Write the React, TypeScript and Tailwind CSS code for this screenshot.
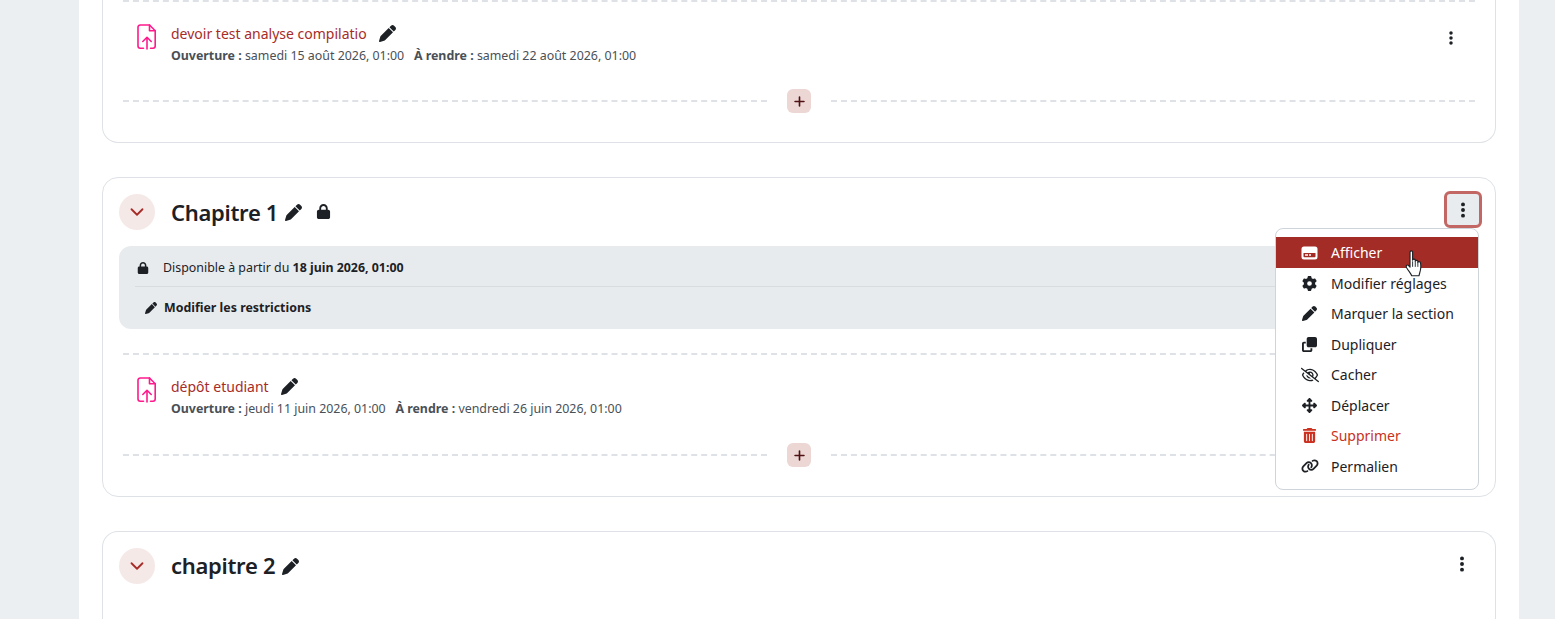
import React from "react";
import { ChevronDown } from "lucide-react";
import {
  FaPen,
  FaLock,
  FaEllipsisVertical,
  FaGear,
  FaClone,
  FaRegEyeSlash,
  FaUpDownLeftRight,
  FaTrashCan,
  FaLink,
  FaPlus,
} from "react-icons/fa6";

function FileUp() {
  return (
    <svg width="20" height="26" viewBox="0 0 20 26" fill="none" stroke="#ff1a8c" strokeWidth="1.6" strokeLinejoin="round" strokeLinecap="round">
      <path d="M6.5 24.2H3.2A2.2 2.2 0 0 1 1 22V3.2A2.2 2.2 0 0 1 3.2 1H12.5L18.2 6.8V22A2.2 2.2 0 0 1 16 24.2H13.5" />
      <path d="M12.5 1V6.8H18.2" />
      <path d="M10 25V13.5M5.8 17.5L10 13.3L14.2 17.5" />
    </svg>
  );
}

function Dashed() {
  return <div className="h-0 border-t-2 border-dashed border-[#dee2e6] flex-1" />;
}

function AddRow() {
  return (
    <div className="flex items-center gap-[20px]">
      <Dashed />
      <div className="w-6 h-6 rounded-md bg-[#ecd7d5] flex items-center justify-center text-[#4f1212] text-[13px]">
        <FaPlus />
      </div>
      <Dashed />
    </div>
  );
}

function Activity({ name, height, open, due, dots }: { name: string; height: string; open: string; due: string; dots?: boolean }) {
  return (
    <div className={`flex items-start pl-[14px] pr-[16px] relative ${height}`}>
      <div className="mt-[-1px] w-[34px] shrink-0"><FileUp /></div>
      <div className="min-w-0 -mt-[3px]">
        <div className="flex items-center h-[23px] text-[14px] text-[#a72c28] whitespace-nowrap">
          <span>{name}</span>
          <FaPen className="text-[#1d2125] text-[17px] -mt-[1px] ml-[12px]" />
        </div>
        <div className="text-[12.4px] leading-[22px] text-[#495057] whitespace-pre">
          <b className="font-bold">Ouverture :</b> {open}
          {"   "}
          <b className="font-bold">À rendre :</b> {due}
        </div>
      </div>
      {dots && (
        <div className="ml-auto pt-[5px] text-[#1d2125] text-[16px]">
          <FaEllipsisVertical />
        </div>
      )}
    </div>
  );
}

function Toggle() {
  return (
    <div className="w-9 h-9 rounded-full bg-[#f5e9e8] flex items-center justify-center text-[#a72c28] shrink-0">
      <ChevronDown size={22} strokeWidth={2} />
    </div>
  );
}

function MenuItem({ icon, label, active, danger }: { icon: React.ReactNode; label: string; active?: boolean; danger?: boolean }) {
  const color = active ? "bg-[#a32c27] text-white" : danger ? "text-[#ca3120]" : "text-[#1d2125]";
  return (
    <div className={`flex items-center h-[30.5px] pl-[25px] text-[14px] whitespace-nowrap ${color}`}>
      <span className="w-[30px] flex items-center text-[15px] pl-[1px]">{icon}</span>
      <span>{label}</span>
    </div>
  );
}

function CardIcon() {
  return (
    <svg width="17" height="14" viewBox="0 0 17 14" className="-ml-[1px]">
      <path fill="currentColor" fillRule="evenodd" d="M3 0.5H14A2.5 2.5 0 0 1 16.5 3V11A2.5 2.5 0 0 1 14 13.5H3A2.5 2.5 0 0 1 .5 11V3A2.5 2.5 0 0 1 3 .5ZM2.5 7V10.5A.8.8 0 0 0 3.3 11.3H13.7A.8.8 0 0 0 14.5 10.5V7ZM4 8.2H7V9.8H4ZM8 8.2H10V9.8H8Z" />
    </svg>
  );
}

function Hand() {
  return (
    <svg width="19" height="27" viewBox="0 0 17 24" className="absolute left-[129px] top-[13px]">
      <path
        fill="#fff"
        stroke="#1d2125"
        strokeWidth="1"
        strokeLinejoin="round"
        d="M4.5 1.8C4.5.4 6.8.4 6.8 1.8V9C7 7.8 9 7.8 9.2 9V10C9.4 8.9 11.3 8.9 11.5 10V11C11.7 10 13.6 10 13.8 11.2C14.2 13 14.2 16 13.8 18C13.3 20 13 21 12.5 23H6C5.2 21 3.5 19 1.6 16C.4 14 1.8 12.6 3.2 13.8L4.5 15.2Z"
      />
      <path stroke="#1d2125" strokeWidth=".8" d="M6.8 10V15M9.2 10V15M11.5 11V15" />
    </svg>
  );
}

function Menu() {
  return (
    <div className="absolute left-[1172px] top-[50px] w-[204px] h-[262px] bg-white border border-[#ced4da] rounded-lg pt-[8.4px] z-10">
      <div className="relative">
        <MenuItem active icon={<CardIcon />} label="Afficher" />
        <Hand />
      </div>
      <MenuItem icon={<FaGear />} label="Modifier réglages" />
      <MenuItem icon={<FaPen />} label="Marquer la section" />
      <MenuItem icon={<FaClone />} label="Dupliquer" />
      <MenuItem icon={<FaRegEyeSlash className="text-[18px] -ml-[1px]" />} label="Cacher" />
      <MenuItem icon={<FaUpDownLeftRight />} label="Déplacer" />
      <MenuItem danger icon={<FaTrashCan />} label="Supprimer" />
      <MenuItem icon={<FaLink className="text-[18px] -ml-[1px]" />} label="Permalien" />
    </div>
  );
}

export default function App() {
  return (
    <div className="h-[619px] overflow-hidden bg-[#ebeff2] font-['Noto_Sans',sans-serif]">
      <div className="mx-[79px] w-[1440px] h-[619px] bg-white px-[23px] flex flex-col gap-[34px]">
        <section className="relative -mt-[20px] h-[163px] shrink-0 border border-[#dee2e6] rounded-b-2xl border-t-0 px-[20px] pt-[20px]">
          <div className="h-0 border-t-2 border-dashed border-[#dee2e6]" />
          <div className="pt-[23px]">
            <Activity name="devoir test analyse compilatio" height="h-[64px]" open="samedi 15 août 2026, 01:00" due="samedi 22 août 2026, 01:00" dots />
          </div>
          <AddRow />
        </section>

        <section className="relative h-[320px] shrink-0 border border-[#dee2e6] rounded-2xl px-[16px] pt-[16px]">
          <div className="flex items-center h-9">
            <Toggle />
            <h3 className="ml-[16px] text-[22px] font-semibold tracking-[-0.3px] text-[#1d2125]">Chapitre 1</h3>
            <FaPen className="ml-[7px] text-[17px] text-[#1d2125]" />
            <FaLock className="ml-[14px] text-[15px] text-[#1d2125] -mt-[1px]" />
            <div className="ml-auto w-[38px] h-[37px] rounded-md bg-[#e9ecef] border-[3px] border-[#c26764] flex items-center justify-center text-[#1d2125] text-[18px] -mt-[5px] -mr-[3px]">
              <FaEllipsisVertical />
            </div>
          </div>
          <div className="mt-[16px] bg-[#e8ebee] rounded-xl h-[83px] pl-[16px] pr-[16px] text-[12.4px] text-[#1d2125]">
            <div className="h-[41px] flex items-center border-b border-[#d9dcdf]">
              <FaLock className="text-[12px] ml-[2px] mr-[14px] mt-[4px]" />
              <span className="mt-[5px]">Disponible à partir du <b>18 juin 2026, 01:00</b></span>
            </div>
            <div className="h-[41px] flex items-center pl-[10px] font-bold">
              <FaPen className="text-[12px] mr-[7px] mt-[1px]" />
              <span className="mt-[1px]">Modifier les restrictions</span>
            </div>
          </div>
          <div className="mx-[4px] mt-[24px]">
            <div className="h-0 border-t-2 border-dashed border-[#dee2e6]" />
            <div className="pt-[23px]">
              <Activity name="dépôt etudiant" height="h-[65px]" open="jeudi 11 juin 2026, 01:00" due="vendredi 26 juin 2026, 01:00" />
            </div>
            <AddRow />
          </div>
          <Menu />
        </section>

        <section className="relative flex-1 border border-[#dee2e6] border-b-0 rounded-t-2xl px-[16px] pt-[16px]">
          <div className="flex items-center h-9">
            <Toggle />
            <h3 className="ml-[16px] text-[22px] font-semibold tracking-[-0.3px] text-[#1d2125] -mt-[1px]">chapitre 2</h3>
            <FaPen className="ml-[7px] text-[17px] text-[#1d2125]" />
            <div className="ml-auto mr-[8px] text-[#1d2125] text-[18px] -mt-[5px]">
              <FaEllipsisVertical />
            </div>
          </div>
        </section>
      </div>
    </div>
  );
}
